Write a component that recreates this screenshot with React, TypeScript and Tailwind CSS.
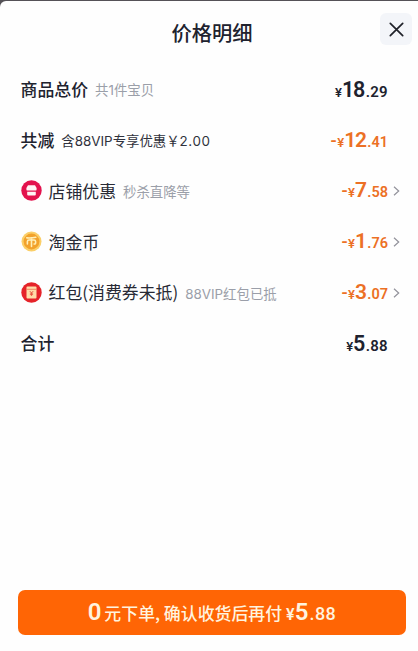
import type { ReactNode } from "react";

interface PriceProps {
  whole: string;
  cents: string;
  minus?: boolean;
}

interface RowProps extends PriceProps {
  label: string;
  note?: ReactNode;
  noteClass?: string;
  icon?: ReactNode;
  arrow?: boolean;
}

function ShopIcon() {
  return (
    <svg width="21" height="21" viewBox="0 0 21 21" className="mr-[7px] shrink-0">
      <circle cx="10.5" cy="10.5" r="10.2" fill="#e3124d" />
      <path d="M7 5.300h7l1.600 2.700v1.400a1.300 1.300 0 0 1-1.300 1.200H6.700a1.300 1.300 0 0 1-1.300-1.200V8z" fill="#fff4f5" />
      <path d="M6.200 11.700h8.600v2.800a1 1 0 0 1-1 1H7.200a1 1 0 0 1-1-1z" fill="#fff4f5" />
    </svg>
  );
}

function CoinIcon() {
  return (
    <svg width="21" height="21" viewBox="0 0 21 21" className="mr-[7px] shrink-0">
      <circle cx="10.5" cy="10.5" r="10" fill="#fbcf68" />
      <circle cx="10.5" cy="10.5" r="7.900" fill="#f2a22c" />
      <path
        d="M5.800 6.900c3.200.2 6.300 0 9-.7M10.500 6.700v8.700M6.400 13V10.600q0-1.600 1.600-1.600h5q1.600 0 1.600 1.600v1.400q0 1.100-1.500 1"
        fill="none"
        stroke="#fff0b8"
        strokeWidth="1.600"
        strokeLinecap="round"
      />
    </svg>
  );
}

function PacketIcon() {
  return (
    <svg width="21" height="21" viewBox="0 0 21 21" className="mr-[7px] shrink-0">
      <circle cx="10.5" cy="10.5" r="10.2" fill="#e52329" />
      <rect x="5.500" y="4.600" width="10" height="12" rx="1" fill="#ffdca8" />
      <path d="M5.500 7.300h10" fill="none" stroke="#ee7450" strokeWidth=".8" />
      <path d="M8.700 9l1.800 1.900L12.300 9M10.500 10.900v3M8.900 11.200h3.200M8.900 12.600h3.200" fill="none" stroke="#e34b38" strokeWidth=".8" />
    </svg>
  );
}

function Price({ whole, cents, minus }: PriceProps) {
  return (
    <span
      className={`flex items-baseline font-[Roboto,'Noto_Sans_CJK_SC',sans-serif] font-semibold leading-none ${
        minus ? "text-[#ec7025]" : "text-[#20222e]"
      }`}
    >
      {minus && <span className="mr-[0.500px] text-[18px] font-medium">-</span>}
      <span className="text-[13px]">¥</span>
      <span className={`tracking-[-1.200px] ${minus ? "text-[21px]" : "text-[21.500px]"}`}>{whole}</span>
      <span className={`ml-[1.500px] ${minus ? "text-[14.500px]" : "text-[15px] tracking-[0.300px]"}`}>.{cents}</span>
    </span>
  );
}

function Row({ label, note, noteClass = "text-[#9b9fa9]", icon, arrow, ...price }: RowProps) {
  return (
    <li className="flex h-[50.8px] items-center">
      {icon}
      <span className={`pb-px text-[16.900px] whitespace-nowrap ${icon ? "font-normal text-[#282a35]" : "font-medium text-[#20222e]"}`}>
        {label}
      </span>
      {note && (
        <span className={`ml-[7px] pt-[2px] font-[Inter,'Noto_Sans_CJK_SC',sans-serif] text-[13.400px] whitespace-nowrap ${noteClass}`}>
          {note}
        </span>
      )}
      <span className="ml-auto">
        <Price {...price} />
      </span>
      <span className="flex w-[12px] justify-end">
        {arrow && (
          <svg width="7" height="10" viewBox="0 0 7 10" fill="none" stroke="#92929b" strokeWidth="1.200">
            <path d="M1 .7l4.700 4.300L1 9.300" />
          </svg>
        )}
      </span>
    </li>
  );
}

export default function App() {
  return (
    <div className="h-[651px] w-[418px] overflow-hidden bg-[#555257] pt-px font-['Noto_Sans_CJK_SC',sans-serif]">
      <main className="flex h-[650px] flex-col rounded-tl-[6px] bg-[#fefefe]">
        <header className="grid h-[63px] grid-cols-[44px_1fr_32px] items-start pt-3 pr-[6px]">
          <span />
          <h1 className="pt-[5px] text-center text-[20.300px] leading-[28px] font-medium text-[#20222e]">价格明细</h1>
          <button className="flex h-[32px] w-[32px] items-center justify-center rounded-[6px] bg-[#f3f5f9]" aria-label="关闭">
            <svg width="15" height="15" viewBox="0 0 15 15" fill="none" stroke="#20222a" strokeWidth="1.700" strokeLinecap="round">
              <path d="M1.300 1.300l12.400 12.400M13.700 1.300L1.300 13.700" />
            </svg>
          </button>
        </header>

        <ul className="pr-[18px] pl-[20.500px]">
          <Row label="商品总价" note="共1件宝贝" whole="18" cents="29" />
          <Row
            label="共减"
            note={
              <>
                含88VIP专享优惠￥<span className="tracking-[0.600px]">2.00</span>
              </>
            }
            noteClass="text-[#30323c]"
            whole="12"
            cents="41"
            minus
          />
          <Row label="店铺优惠" note="秒杀直降等" icon={<ShopIcon />} whole="7" cents="58" minus arrow />
          <Row label="淘金币" icon={<CoinIcon />} whole="1" cents="76" minus arrow />
          <Row label="红包(消费券未抵)" note="88VIP红包已抵" icon={<PacketIcon />} whole="3" cents="07" minus arrow />
          <Row label="合计" whole="5" cents="88" />
        </ul>

        <button className="mr-[12px] mb-[16px] ml-[18px] mt-auto flex h-[45px] shrink-0 items-baseline justify-center rounded-[7px] bg-[#ff6505] font-medium text-[#fff3df]">
          <span className="font-[Roboto,sans-serif] text-[24px] leading-[45px] font-semibold">0</span>
          <span className="ml-[3px] text-[16.900px] whitespace-nowrap">元下单, 确认收货后再付</span>
          <span className="ml-[4px] font-[Roboto,sans-serif] text-[16px] font-semibold">¥</span>
          <span className="font-[Roboto,sans-serif] text-[24px] font-semibold">5</span>
          <span className="ml-px font-[Roboto,sans-serif] text-[18px] tracking-[0.500px]">.88</span>
        </button>
      </main>
    </div>
  );
}
